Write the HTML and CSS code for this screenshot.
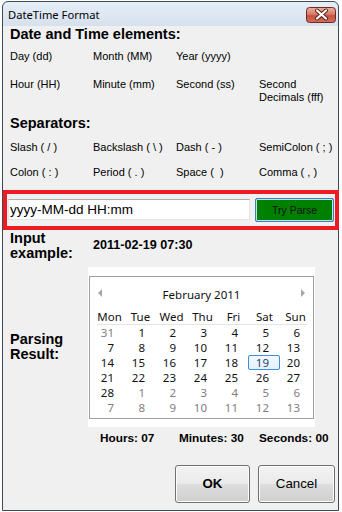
FILE: index.html
```html
<!DOCTYPE html>
<html>
<head>
<meta charset="utf-8">
<link rel="stylesheet" href="styles.css">
</head>
<body>
<div class="window">
  <div class="titlebar">
    <span class="title">DateTime Format</span>
    <div class="close">
      <svg width="30" height="16" viewBox="0 0 30 16">
        <defs>
          <linearGradient id="cg" x1="0" y1="0" x2="0" y2="1">
            <stop offset="0" stop-color="#eab2a4"/>
            <stop offset="0.45" stop-color="#d97a68"/>
            <stop offset="0.55" stop-color="#c8503e"/>
            <stop offset="1" stop-color="#d0705a"/>
          </linearGradient>
        </defs>
        <rect x="0.5" y="0.5" width="29" height="15" rx="3" fill="url(#cg)" stroke="#6b2a22"/>
        <path d="M11 3.5 L20 11.5 M20 3.5 L11 11.5" stroke="#5a1d16" stroke-width="4" stroke-linecap="round"/>
        <path d="M11 3.5 L20 11.5 M20 3.5 L11 11.5" stroke="#fff" stroke-width="2.2" stroke-linecap="round"/>
      </svg>
    </div>
  </div>
  <div class="client">
    <div class="heading">Date and Time elements:</div>
    <div class="cols elems">
      <div>Day (dd)</div><div>Month (MM)</div><div>Year (yyyy)</div><div></div>
      <div>Hour (HH)</div><div>Minute (mm)</div><div>Second (ss)</div><div>Second<br>Decimals (fff)</div>
    </div>
    <div class="heading sep-head">Separators:</div>
    <div class="cols seps">
      <div>Slash ( / )</div><div>Backslash ( \ )</div><div>Dash ( - )</div><div>SemiColon ( ; )</div>
      <div>Colon ( : )</div><div>Period ( . )</div><div>Space (&nbsp; )</div><div>Comma ( , )</div>
    </div>
    <div class="highlight">
      <div class="textbox">yyyy-MM-dd HH:mm</div>
      <div class="parse">Try Parse</div>
    </div>
    <div class="example">
      <div class="label">Input<br>example:</div>
      <div class="value">2011-02-19 07:30</div>
    </div>
    <div class="result">
      <div class="label rlabel">Parsing<br>Result:</div>
      <div class="cal">
        <div class="cal-inner">
          <div class="cal-head"><span class="arr left"></span><span class="month">February 2011</span><span class="arr right"></span></div>
          <div class="dnames"><span>Mon</span><span>Tue</span><span>Wed</span><span>Thu</span><span>Fri</span><span>Sat</span><span>Sun</span></div>
          <div class="dline"></div>
          <div class="days">
            <span class="o">31</span><span>1</span><span>2</span><span>3</span><span>4</span><span>5</span><span>6</span>
            <span>7</span><span>8</span><span>9</span><span>10</span><span>11</span><span>12</span><span>13</span>
            <span>14</span><span>15</span><span>16</span><span>17</span><span>18</span><span class="sel">19</span><span>20</span>
            <span>21</span><span>22</span><span>23</span><span>24</span><span>25</span><span>26</span><span>27</span>
            <span>28</span><span class="o">1</span><span class="o">2</span><span class="o">3</span><span class="o">4</span><span class="o">5</span><span class="o">6</span>
            <span class="o">7</span><span class="o">8</span><span class="o">9</span><span class="o">10</span><span class="o">11</span><span class="o">12</span><span class="o">13</span>
          </div>
        </div>
      </div>
    </div>
    <div class="times">
      <div>Hours: 07</div><div>Minutes: 30</div><div>Seconds: 00</div>
    </div>
    <div class="buttons">
      <div class="btn ok">OK</div>
      <div class="btn cancel">Cancel</div>
    </div>
  </div>
</div>
</body>
</html>
```

FILE: styles.css
```css
* { box-sizing: border-box; }
html, body { margin: 0; padding: 0; }
body {
  width: 342px;
  height: 512px;
  overflow: hidden;
  background: #ffffff;
  font-family: "Liberation Sans", Arial, sans-serif;
  color: #000;
}
.window {
  margin: 1px 0 0 2px;
  width: 337px;
  height: 510px;
  border: 1px solid #3f4a56;
  border-radius: 6px 6px 0 0;
  background: linear-gradient(#e6eef7, #d6e1ee 24px);
  display: flex;
  flex-direction: column;
}
.titlebar {
  height: 24px;
  flex: none;
  display: flex;
  align-items: flex-start;
  justify-content: space-between;
  padding: 0 2px 0 5px;
}
.title {
  font-family: "Noto Sans", sans-serif;
  font-size: 11.2px;
  line-height: 16px;
  padding-top: 5px;
  color: #000;
}
.close { margin-top: 5px; height: 16px; }
.close svg { display: block; }
.client {
  flex: 1;
  background: #f0f0f0;
  padding: 0 0 0 7px;
}
.heading {
  font-weight: bold;
  font-size: 14.5px;
  line-height: 17px;
}
.cols {
  display: grid;
  grid-template-columns: repeat(4, 83px);
  font-size: 11px;
  line-height: 13px;
}
.elems { margin-top: 7px; row-gap: 15px; }
.sep-head { margin-top: 11px; }
.seps { margin-top: 9px; row-gap: 12px; }
.highlight {
  margin: 11px 0 0 -7px;
  width: 336px;
  height: 40px;
  border: 4px solid #ed1c24;
  display: flex;
  align-items: flex-start;
}
.textbox {
  margin: 5px 0 0 1px;
  width: 242px;
  height: 21px;
  background: #fff;
  border: 1px solid #e2e5ea;
  border-top-color: #abadb3;
  font-size: 13.5px;
  line-height: 19px;
  padding-left: 1px;
}
.parse {
  margin: 4px 1px 0 auto;
  width: 79px;
  height: 24px;
  background: #008000;
  border: 1px solid #3c7fb1;
  border-radius: 2px;
  box-shadow: inset 0 0 0 1px #bfe0f2;
  font-size: 10.5px;
  line-height: 22px;
  text-align: center;
  color: #111;
}
.example { display: flex; margin-top: 1px; }
.label {
  font-weight: bold;
  font-size: 14.5px;
  line-height: 15px;
}
.example .label { width: 83px; }
.example .value {
  margin-top: 7px;
  font-weight: bold;
  font-size: 12.6px;
  line-height: 15px;
}
.result {
  display: flex;
  align-items: center;
  margin-top: 6px;
}
.rlabel { width: 78px; }
.cal {
  width: 227px;
  height: 160px;
  background: #fff;
  padding: 9px 0 0 1px;
  font-family: "Noto Sans", sans-serif;
  font-size: 11.5px;
  color: #111;
}
.cal-inner {
  width: 225px;
  height: 143px;
  border: 1px solid #a0a0a0;
}
.cal-head {
  display: flex;
  justify-content: space-between;
  align-items: center;
  padding: 10px 8px 0 8px;
  line-height: 15px;
}
.arr { width: 0; height: 0; border-top: 4px solid transparent; border-bottom: 4px solid transparent; margin-top: -3px; }
.arr.left { border-right: 4px solid #a7a7a7; }
.arr.right { border-left: 4px solid #a7a7a7; }
.dnames {
  display: grid;
  grid-template-columns: repeat(7, 31px);
  margin: 7px 0 0 4px;
  line-height: 15px;
  text-align: center;
}
.dline {
  height: 1px;
  width: 210px;
  margin-left: 7px;
  background: #e4e4e4;
}
.days {
  display: grid;
  grid-template-columns: repeat(7, 31px);
  grid-auto-rows: 15px;
  margin-left: 4px;
  line-height: 15px;
  text-align: right;
}
.days span { padding-right: 11px; }
.days .o { color: #857c80; }
.days .sel {
  border: 1px solid #3d8ee6;
  border-radius: 2px;
  line-height: 13px;
  padding-right: 10px;
  background: linear-gradient(#f3f9ff, #e4f0fc);
  color: #1f3f6a;
  margin-left: -1px;
}
.times {
  display: grid;
  grid-template-columns: 79px 80px auto;
  padding-left: 90px;
  margin-top: 4px;
  font-weight: bold;
  font-size: 11.8px;
  line-height: 14px;
}
.buttons {
  display: flex;
  justify-content: flex-end;
  gap: 8px;
  margin-top: 20px;
  padding-right: 3px;
}
.btn {
  height: 38px;
  border: 1px solid #707070;
  border-radius: 3px;
  background: linear-gradient(#f2f2f2 0%, #ebebeb 48%, #dddddd 52%, #cfcfcf 100%);
  box-shadow: inset 0 0 0 1px #fcfcfc;
  font-size: 13.3px;
  line-height: 36px;
  text-align: center;
  color: #000;
}
.ok { width: 75px; font-weight: bold; }
.cancel { width: 77px; }
```
